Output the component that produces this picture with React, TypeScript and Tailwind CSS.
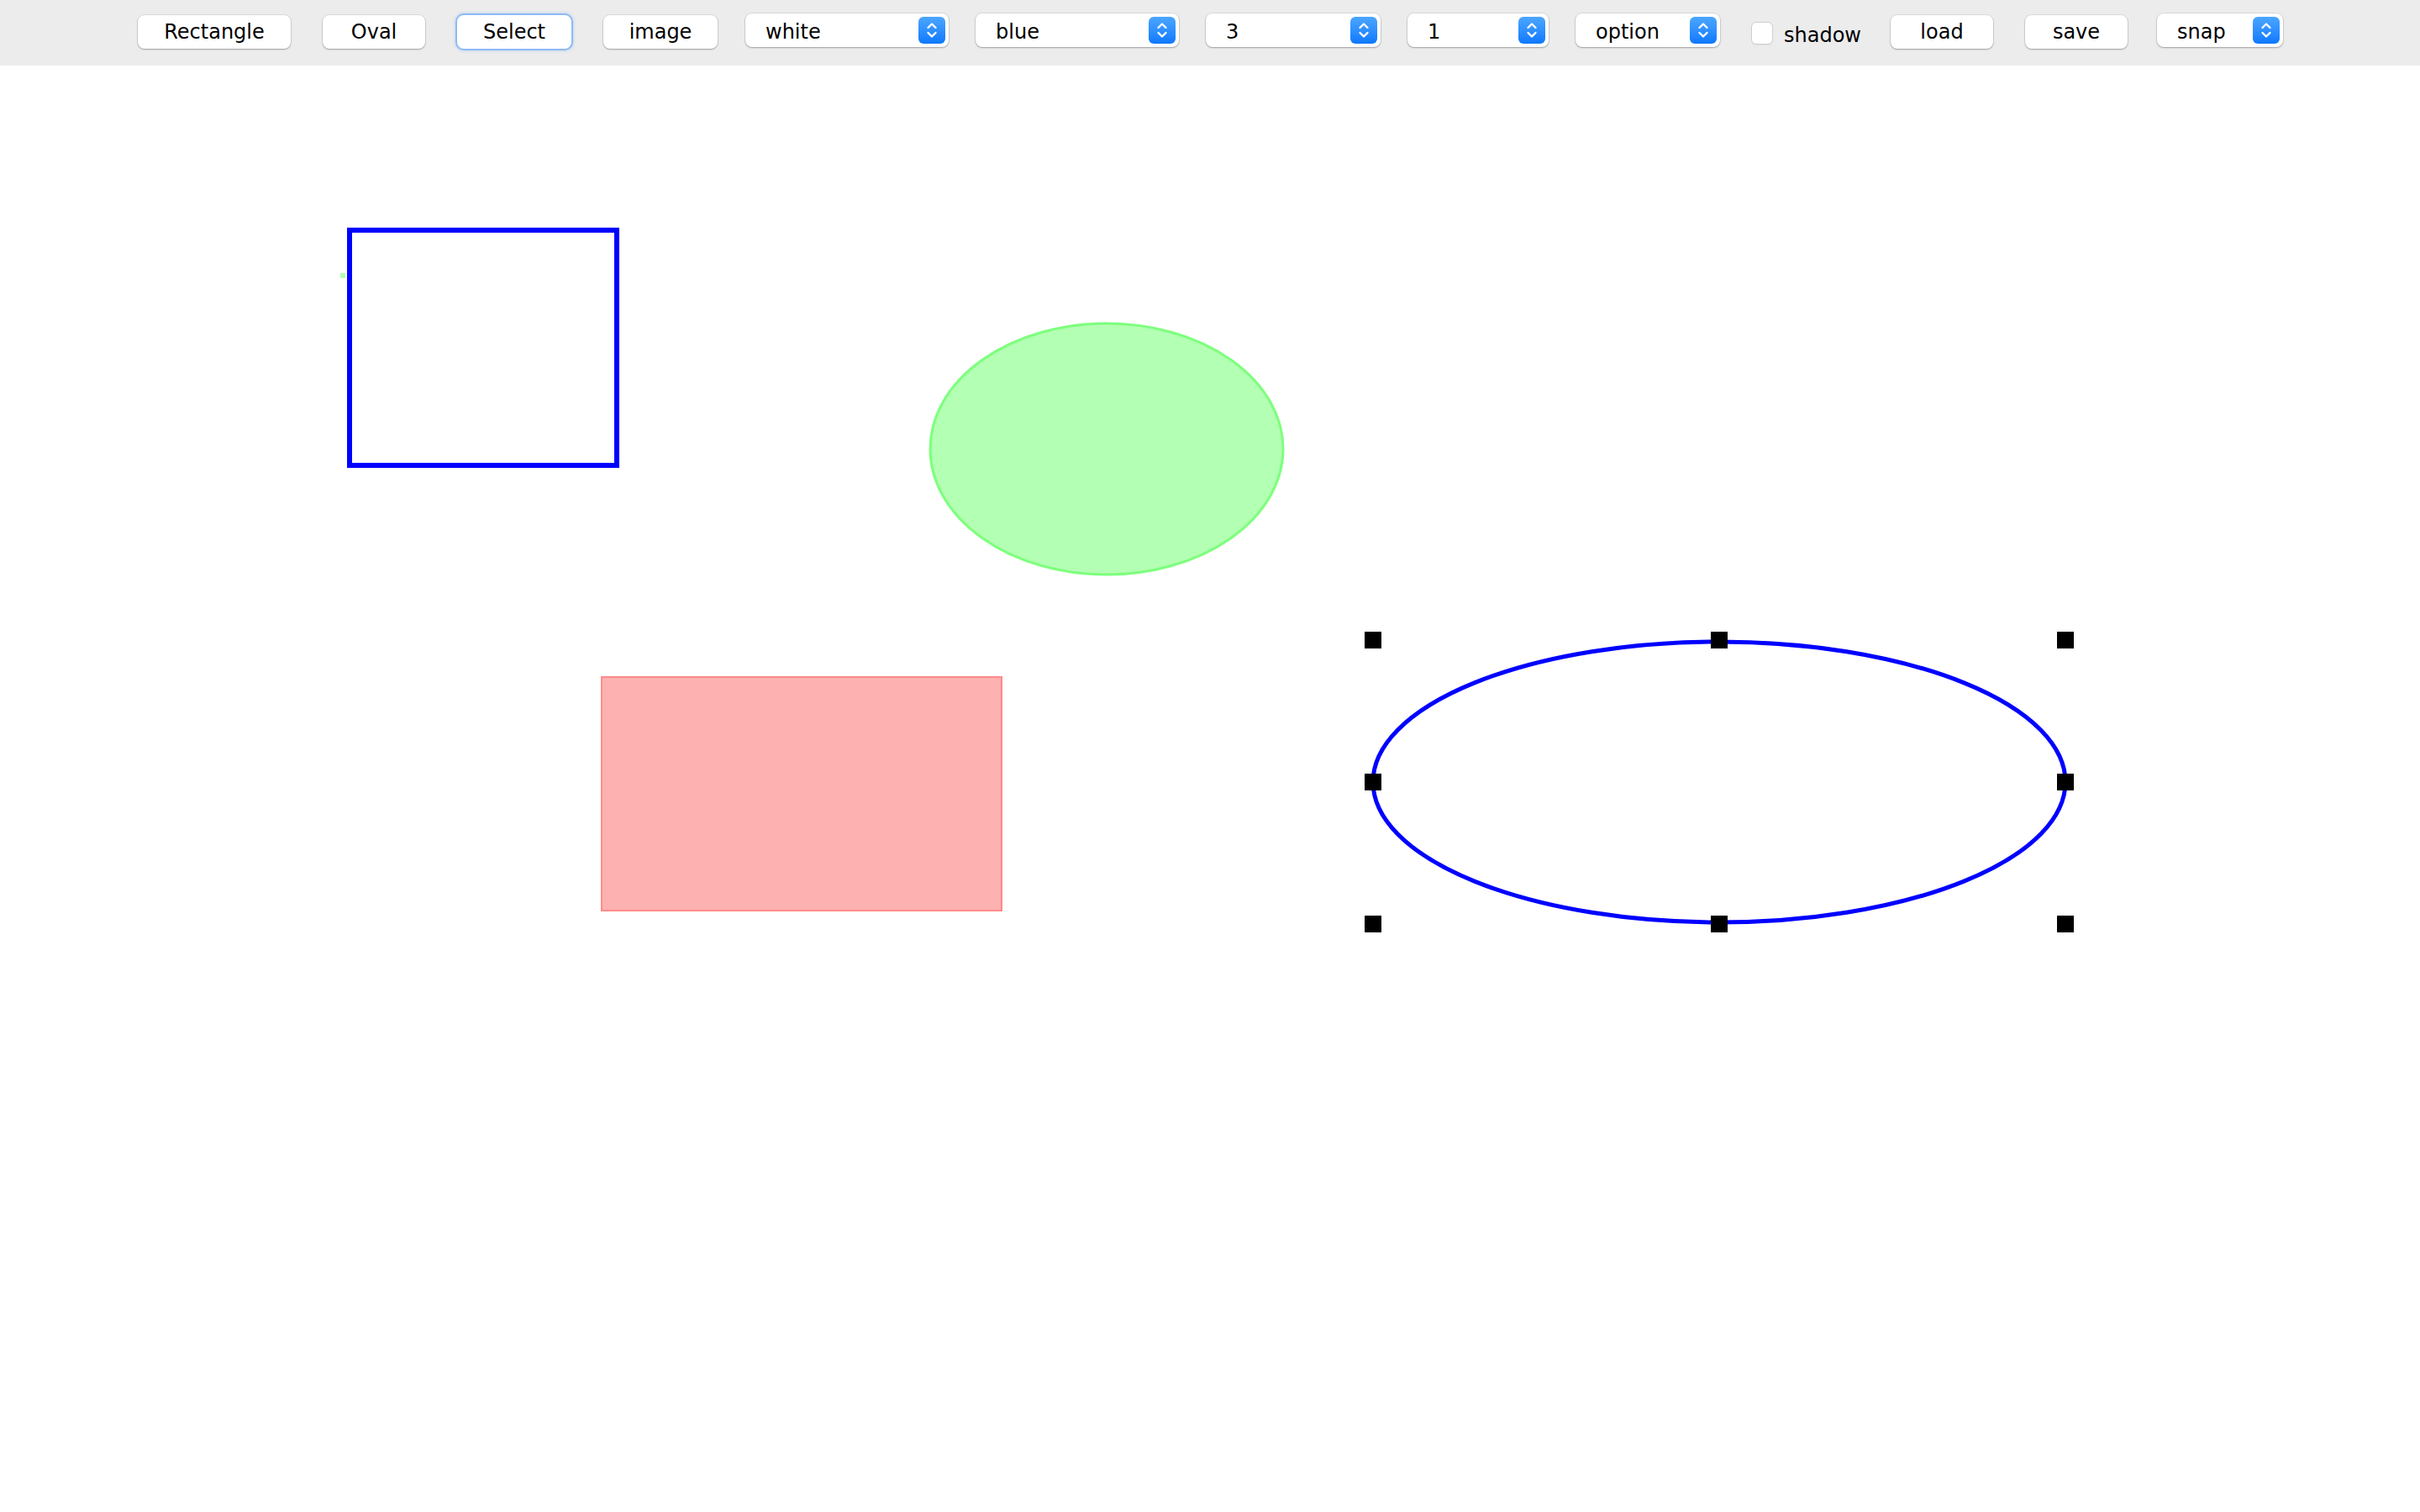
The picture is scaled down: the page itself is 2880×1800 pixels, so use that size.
import React from 'react'

type Item =
    | { kind: 'button'; label: string; focused?: boolean }
    | { kind: 'select'; label: string }
    | { kind: 'check'; label: string }

const buttonWidths: Record<string, string> = {
    Rectangle: 'w-[182px]',
    Oval: 'w-[122px]',
    Select: 'w-[136px]',
    image: 'w-[136px]',
    load: 'w-[122px]',
    save: 'w-[122px]',
}

const selectWidths: Record<string, string> = {
    white: 'w-[242px] ml-[14px]',
    blue: 'w-[242px]',
    '3': 'w-[208px]',
    '1': 'w-[168px]',
    option: 'w-[172px]',
    snap: 'w-[150px]',
}

const items: Item[] = [
    { kind: 'button', label: 'Rectangle' },
    { kind: 'button', label: 'Oval' },
    { kind: 'button', label: 'Select', focused: true },
    { kind: 'button', label: 'image' },
    { kind: 'select', label: 'white' },
    { kind: 'select', label: 'blue' },
    { kind: 'select', label: '3' },
    { kind: 'select', label: '1' },
    { kind: 'select', label: 'option' },
    { kind: 'check', label: 'shadow' },
    { kind: 'button', label: 'load' },
    { kind: 'button', label: 'save' },
    { kind: 'select', label: 'snap' },
]

function ToolButton({ label, focused }: { label: string; focused?: boolean }) {
    return (
        <button
            className={
                'mx-[19px] mt-[18px] h-[40px] rounded-[8px] bg-white text-center leading-[36px] ' +
                buttonWidths[label] +
                (focused
                    ? ' shadow-[0_0_0_2px_#8dbbf6,0_0_3px_3px_rgba(120,170,240,0.3)]'
                    : ' shadow-[0_0_0_1px_rgba(0,0,0,0.07),0_1px_2px_rgba(0,0,0,0.28)]')
            }
        >
            {label}
        </button>
    )
}

function Stepper() {
    return (
        <span className="flex h-[32px] w-[32px] items-center justify-center rounded-[6px] bg-linear-to-b from-[#4ba6ff] to-[#0a78ff]">
            <svg width="32" height="32" viewBox="0 0 32 32" fill="none" stroke="white" strokeWidth="2.4" strokeLinecap="round" strokeLinejoin="round">
                <polyline points="11.5,13 16,8.5 20.5,13" />
                <polyline points="11.5,19 16,23.5 20.5,19" />
            </svg>
        </span>
    )
}

function ToolSelect({ label }: { label: string }) {
    return (
        <div
            className={
                'mx-[16px] mt-[16px] flex h-[40px] items-center justify-between rounded-[8px] bg-white pl-[24px] pr-[4px] shadow-[0_0_0_1px_rgba(0,0,0,0.07),0_1px_2px_rgba(0,0,0,0.28)] ' +
                selectWidths[label]
            }
        >
            <span className="mt-[3px] leading-[36px]">{label}</span>
            <Stepper />
        </div>
    )
}

function ToolCheck({ label }: { label: string }) {
    return (
        <label className="ml-[21px] mr-[16px] mt-[26px] flex items-start gap-[13px]">
            <span className="h-[27px] w-[26px] rounded-[6px] border border-[#cfcfcf] bg-white shadow-[0_1px_1px_rgba(0,0,0,0.06)]" />
            <span className="mt-[2px] leading-[28px]">{label}</span>
        </label>
    )
}

export default function App() {
    const handles = [
        [1634, 684], [2046, 684], [2458, 684],
        [1634, 853], [2458, 853],
        [1634, 1022], [2046, 1022], [2458, 1022],
    ]

    return (
        <div className="flex h-[1800px] w-[2880px] flex-col bg-white font-['DejaVu_Sans',sans-serif] text-[24px] text-black">
            <div className="flex h-[78px] shrink-0 items-start justify-center bg-[#ececec] pr-[2px]">
                {items.map(item => {
                    if (item.kind === 'button') return <ToolButton key={item.label} label={item.label} focused={item.focused} />
                    if (item.kind === 'select') return <ToolSelect key={item.label} label={item.label} />
                    return <ToolCheck key={item.label} label={item.label} />
                })}
            </div>

            <div className="flex-1">
                <svg width="2880" height="1722" viewBox="0 0 2880 1722" className="block">
                    <rect x="405" y="247" width="6" height="6" fill="#b3ffb3" />
                    <rect x="416" y="196" width="318" height="280" fill="none" stroke="#0000ff" strokeWidth="6" />

                    <ellipse cx="1317" cy="456.5" rx="210" ry="149.5" fill="#b3ffb3" stroke="#7dff7d" strokeWidth="3" />

                    <rect x="716" y="728" width="476" height="278" fill="#feb1b1" stroke="#ff8a8a" strokeWidth="2" />

                    <ellipse cx="2046" cy="853" rx="412" ry="167" fill="none" stroke="#0000ff" strokeWidth="5" />
                    {handles.map(([x, y]) => (
                        <rect key={`${x}-${y}`} x={x - 10} y={y - 10} width="20" height="20" fill="#000" />
                    ))}
                </svg>
            </div>
        </div>
    )
}
